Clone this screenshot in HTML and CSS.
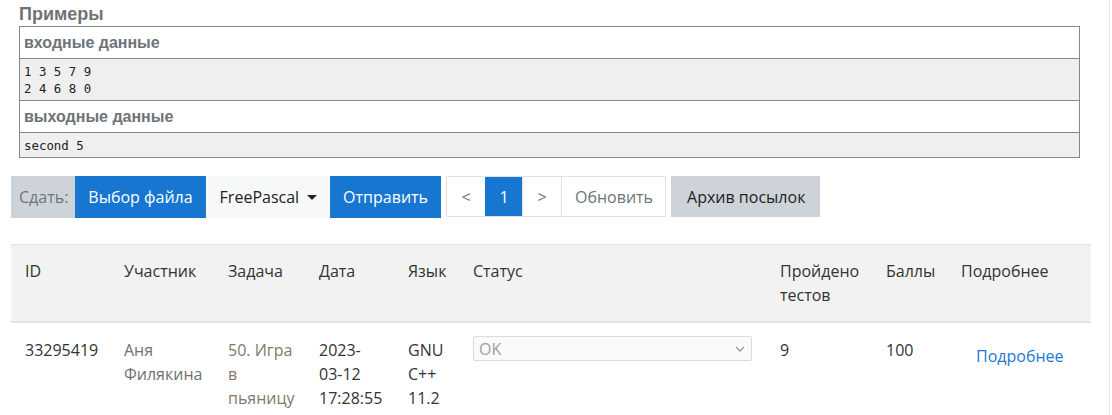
FILE: index.html
```html
<!DOCTYPE html>
<html lang="ru">
<head>
<meta charset="utf-8">
<title>Примеры</title>
<link rel="stylesheet" href="styles.css">
</head>
<body>
<div class="page">
  <section class="samples">
    <h3 class="samples-title">Примеры</h3>
    <div class="sample-box">
      <div class="sample-head">входные данные</div>
      <pre class="sample-data">1 3 5 7 9
2 4 6 8 0</pre>
      <div class="sample-head">выходные данные</div>
      <pre class="sample-data">second 5</pre>
    </div>
  </section>

  <div class="toolbar">
    <span class="tb-label">Сдать:</span>
    <span class="tb-btn tb-primary">Выбор файла</span>
    <span class="tb-btn tb-light">FreePascal <span class="caret"></span></span>
    <span class="tb-btn tb-primary">Отправить</span>
    <div class="pager">
      <span class="pg-item">&lt;</span>
      <span class="pg-item pg-active">1</span>
      <span class="pg-item">&gt;</span>
      <span class="pg-item pg-refresh">Обновить</span>
    </div>
    <span class="tb-btn tb-grey">Архив посылок</span>
  </div>

  <table class="runs">
    <colgroup>
      <col class="c-id"><col class="c-user"><col class="c-task"><col class="c-date"><col class="c-lang"><col class="c-status"><col class="c-tests"><col class="c-score"><col class="c-more">
    </colgroup>
    <thead>
      <tr>
        <th>ID</th><th>Участник</th><th>Задача</th><th>Дата</th><th>Язык</th><th>Статус</th><th>Пройдено тестов</th><th>Баллы</th><th>Подробнее</th>
      </tr>
    </thead>
    <tbody>
      <tr>
        <td>33295419</td>
        <td class="muted">Аня Филякина</td>
        <td class="task">50. Игра в пьяницу</td>
        <td>2023-<br>03-12<br>17:28:55</td>
        <td>GNU<br>C++<br>11.2</td>
        <td><div class="status-select"><span>OK</span><svg class="chev" width="10" height="6" viewBox="0 0 10 6"><path d="M1 1l4 4 4-4" fill="none" stroke="#999" stroke-width="1.3"/></svg></div></td>
        <td>9</td>
        <td>100</td>
        <td><a class="more" href="#">Подробнее</a></td>
      </tr>
    </tbody>
  </table>
</div>
</body>
</html>
```

FILE: styles.css
```css
html, body {
  margin: 0;
  padding: 0;
  background: #fff;
}
.page {
  width: 1109px;
  min-height: 415px;
  border-right: 1px solid #e3e3e3;
  font-family: "Open Sans", "Noto Sans", sans-serif;
  font-size: 16px;
  color: #333;
}
.samples {
  padding: 3px 0 0 19px;
  width: 1061px;
}
.samples-title {
  margin: 0;
  font-family: "Liberation Sans", Arial, sans-serif;
  font-weight: bold;
  font-size: 18px;
  line-height: 23px;
  color: #6e7378;
}
.sample-box {
  border: 1px solid #888;
  border-bottom: 0;
}
.sample-head {
  font-family: "Liberation Sans", Arial, sans-serif;
  font-weight: bold;
  font-size: 16px;
  color: #6e7378;
  height: 31px;
  line-height: 31px;
  padding-left: 4px;
  border-bottom: 1px solid #888;
  background: #fff;
}
.sample-data {
  margin: 0;
  background: #efefef;
  font-family: "DejaVu Sans Mono", monospace;
  font-size: 12.4px;
  line-height: 17px;
  padding: 4px 4px 3px 4px;
  color: #222;
  border-bottom: 1px solid #888;
}
.toolbar {
  display: flex;
  align-items: stretch;
  margin: 18px 0 0 11px;
  height: 42px;
}
.tb-label, .tb-btn {
  display: flex;
  align-items: center;
  padding: 0 14px;
  font-size: 16px;
  white-space: nowrap;
}
.tb-label {
  background: #ced3da;
  color: #6c757d;
  padding: 0 7px 0 8px;
}
.tb-primary {
  background: #1676d0;
  color: #fff;
  padding: 0 13px;
}
.tb-light {
  background: #f7f8f9;
  color: #222;
  padding: 0 13px 0 14px;
}
.caret {
  display: inline-block;
  width: 0;
  height: 0;
  margin-left: 8px;
  border-left: 5px solid transparent;
  border-right: 5px solid transparent;
  border-top: 5px solid #222;
}
.tb-primary + .pager {
  margin-left: 5px;
}
.tb-grey {
  background: #ced3da;
  color: #222;
  margin-left: 5px;
  height: 41px;
  padding: 0 15px 0 16px;
}
.pager {
  display: flex;
  height: 41px;
  border: 1px solid #dee2e6;
  box-sizing: border-box;
}
.pg-item {
  display: flex;
  align-items: center;
  justify-content: center;
  font-size: 16px;
  color: #6c757d;
  width: 38px;
  border-left: 1px solid #dee2e6;
}
.pg-item:first-child {
  border-left: 0;
}
.pg-active {
  background: #1676d0;
  color: #fff;
  border-left-color: #1676d0;
  width: 36px;
}
.pg-refresh {
  width: auto;
  padding: 0 12px 0 13px;
}
.runs {
  margin: 26px 0 0 11px;
  width: 1080px;
  border-collapse: collapse;
  table-layout: fixed;
}
.c-id { width: 99px; }
.c-user { width: 104px; }
.c-task { width: 91px; }
.c-date { width: 89px; }
.c-lang { width: 65px; }
.c-status { width: 307px; }
.c-tests { width: 106px; }
.c-score { width: 75px; }
.c-more { width: 144px; }
.runs th, .runs td {
  text-align: left;
  vertical-align: top;
  font-weight: normal;
  line-height: 24px;
  padding: 15px 6px 15px 14px;
  color: #333;
}
.runs thead tr {
  background: #f2f2f2;
  border-top: 1px solid #e2e2e2;
  border-bottom: 2px solid #e2e2e2;
}
.runs th {
  padding: 14px 6px 14px 14px;
  height: 48px;
}
.runs td.muted {
  color: #707070;
}
.runs td.task {
  color: #85786b;
}
.status-select {
  display: flex;
  align-items: center;
  justify-content: space-between;
  width: 279px;
  height: 25px;
  box-sizing: border-box;
  margin-top: -2px;
  border: 1px solid #dcdcdc;
  border-radius: 2px;
  background: #fafafa;
  padding: 0 6px 0 5px;
  color: #a0a0a0;
  font-size: 16px;
}
.chev {
  display: block;
}
.more {
  display: inline-block;
  color: #1e78d4;
  text-decoration: none;
  padding: 6px 0 0 15px;
}
```
